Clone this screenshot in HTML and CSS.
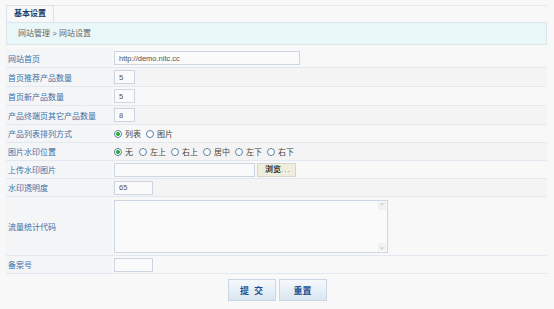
FILE: index.html
```html
<!DOCTYPE html>
<html lang="zh-CN">
<head>
    <meta charset="UTF-8">
    <title>基本设置</title>
    <link rel="stylesheet" href="styles.css">
</head>
<body>

    <div class="tab-bar">
        <div class="tab">基本设置</div>
    </div>
    <div class="crumb">网站管理 &gt; 网站设置</div>

    <div class="form">
        <div class="row tall">
            <div class="label">网站首页</div>
            <div class="value"><input class="txt wide" type="text" value="http://demo.nitc.cc"></div>
        </div>
        <div class="row alt tall">
            <div class="label">首页推荐产品数量</div>
            <div class="value"><input class="txt num" type="text" value="5"></div>
        </div>
        <div class="row tall">
            <div class="label">首页新产品数量</div>
            <div class="value"><input class="txt num" type="text" value="5"></div>
        </div>
        <div class="row alt tall">
            <div class="label">产品终端页其它产品数量</div>
            <div class="value"><input class="txt num" type="text" value="8"></div>
        </div>
        <div class="row">
            <div class="label">产品列表排列方式</div>
            <div class="value">
                <label class="opt"><input type="radio" name="list" checked>列表</label>
                <label class="opt"><input type="radio" name="list">图片</label>
            </div>
        </div>
        <div class="row alt">
            <div class="label">图片水印位置</div>
            <div class="value">
                <label class="opt one"><input type="radio" name="mark" checked>无</label>
                <label class="opt"><input type="radio" name="mark">左上</label>
                <label class="opt"><input type="radio" name="mark">右上</label>
                <label class="opt"><input type="radio" name="mark">居中</label>
                <label class="opt"><input type="radio" name="mark">左下</label>
                <label class="opt"><input type="radio" name="mark">右下</label>
            </div>
        </div>
        <div class="row">
            <div class="label">上传水印图片</div>
            <div class="value">
                <input class="txt file" type="text" value="">
                <span class="browse">浏览<span class="dots">...</span></span>
            </div>
        </div>
        <div class="row alt">
            <div class="label">水印透明度</div>
            <div class="value"><input class="txt mid" type="text" value="65"></div>
        </div>
        <div class="row code">
            <div class="label">流量统计代码</div>
            <div class="value">
                <div class="area-wrap">
                    <textarea class="area"></textarea>
                    <span class="arrow up">&#8963;</span>
                    <span class="arrow down">&#8964;</span>
                </div>
            </div>
        </div>
        <div class="row">
            <div class="label">备案号</div>
            <div class="value"><input class="txt mid" type="text" value=""></div>
        </div>
    </div>

    <div class="actions">
        <button class="btn spaced">提交</button>
        <button class="btn">重置</button>
    </div>

</body>
</html>
```

FILE: styles.css
```css
body{
    margin: 0;
    padding: 5px 7px 0 6px;
    background-color: #f8f8f8;
    font-family: "Liberation Sans", "Noto Sans CJK SC", sans-serif;
    font-size: 8px;
    color: #555;
}

.tab-bar{
    height: 16px;
    border-top: 1px solid #e4e9ee;
    display: flex;
}

.tab{
    width: 48px;
    height: 17px;
    margin-top: -1px;
    box-sizing: border-box;
    border: 1px solid #dbe3ea;
    border-bottom: none;
    background-color: #f8f8f8;
    padding-left: 7px;
    line-height: 16px;
    font-weight: bold;
    color: #1c3a64;
    position: relative;
    z-index: 1;
}

.crumb{
    height: 23px;
    box-sizing: border-box;
    border: 1px solid #dbe5ea;
    background-color: #eaf7f8;
    padding-left: 11px;
    line-height: 21px;
    color: #666;
}

.form{
    margin-top: 4px;
}

.row{
    display: flex;
    height: 17px;
    border-bottom: 1px solid #e2e8ef;
}

.row.tall{
    height: 18px;
}

.row.alt .value{
    background-color: #f4f4f4;
}

.row.code{
    height: 58px;
}

.label{
    width: 106px;
    flex-shrink: 0;
    padding-left: 2px;
    box-sizing: border-box;
    display: flex;
    align-items: center;
    color: #3f6ea6;
    background-color: #f4f5f6;
}

.value{
    flex: 1;
    display: flex;
    align-items: center;
    padding-left: 2px;
}

.txt{
    height: 14px;
    box-sizing: border-box;
    border: 1px solid #cbd6e2;
    background-color: #fafafa;
    font-family: "Liberation Sans", "Noto Sans CJK SC", sans-serif;
    font-size: 7.5px;
    color: #555;
    padding: 0 4px;
    margin: 0;
}

.txt.wide{ width: 186px; }
.txt.num{ width: 21px; }
.txt.mid{ width: 39px; }
.txt.file{ width: 141px; }

.opt{
    display: flex;
    align-items: center;
    margin-right: 5px;
    color: #444;
}

.opt input{
    appearance: none;
    width: 8px;
    height: 8px;
    margin: 0 3px 0 0;
    border: 1px solid #5d82a8;
    border-radius: 50%;
    background-color: #fff;
    box-sizing: border-box;
}

.opt input:checked{
    background: radial-gradient(circle, #2fae3c 0 1.8px, #fff 2.2px);
}

.opt.one{
    margin-right: 6px;
}

.browse{
    margin-left: 2px;
    width: 39px;
    height: 14px;
    box-sizing: border-box;
    border: 1px solid #d8d6c8;
    background-color: #efeedc;
    color: #333;
    font-weight: bold;
    line-height: 12px;
    padding-left: 7px;
}

.browse .dots{
    font-weight: normal;
    color: #888;
    letter-spacing: 1px;
}

.area-wrap{
    position: relative;
    width: 274px;
    height: 53px;
}

.area{
    width: 100%;
    height: 100%;
    box-sizing: border-box;
    border: 1px solid #cbd6e2;
    background-color: #fafafa;
    resize: none;
    margin: 0;
    display: block;
}

.arrow{
    position: absolute;
    right: 2px;
    width: 8px;
    height: 8px;
    font-size: 7px;
    line-height: 8px;
    text-align: center;
    color: #aab4be;
    background-color: #f0f1f2;
}

.arrow.up{ top: 2px; }
.arrow.down{ bottom: 2px; }

.actions{
    display: flex;
    justify-content: center;
    gap: 3px;
    margin-top: 5px;
    padding-left: 1px;
}

.btn{
    width: 48px;
    height: 22px;
    border: 1px solid #c9d7e4;
    background: linear-gradient(#f6f9fc, #d9e6f1);
    color: #1f4e8c;
    font-family: "Liberation Sans", "Noto Sans CJK SC", sans-serif;
    font-size: 9px;
    font-weight: bold;
    padding: 0;
}

.btn.spaced{
    letter-spacing: 5px;
    text-indent: 5px;
}
```
